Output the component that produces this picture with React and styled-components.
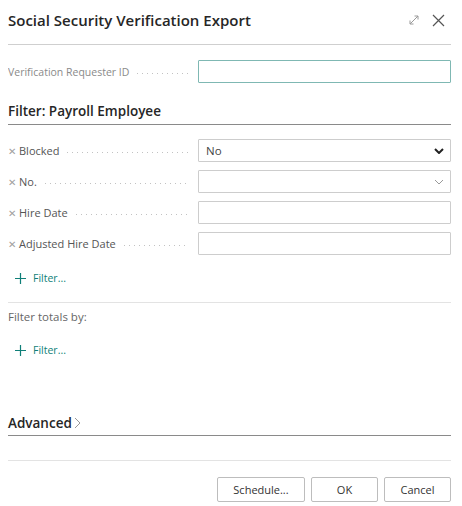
import React from 'react'
import styled, { createGlobalStyle } from 'styled-components'

const GlobalStyle = createGlobalStyle`
  body {
    margin: 0;
    background: #fff;
    font-family: "Open Sans", "Noto Sans", sans-serif;
    color: #333;
  }
`

const Dialog = styled.div`
  width: 462px;
  height: 506px;
  box-sizing: border-box;
  padding: 0 11px 0 8px;
  display: flex;
  flex-direction: column;
`

const Header = styled.div`
  display: flex;
  align-items: center;
  padding: 8px 0 12px;
  border-bottom: 1px solid #cfcfcf;
`

const Title = styled.h1`
  flex: 1;
  margin: 0;
  font-size: 15px;
  font-weight: 600;
  line-height: 24px;
  color: #262626;
`

const HeaderIcons = styled.div`
  display: flex;
  align-items: center;
  gap: 12px;
  padding-right: 6px;
`

const Row = styled.div`
  display: flex;
  align-items: center;
  margin-top: ${p => p.$top || 0}px;
`

const Label = styled.div`
  width: 190px;
  flex: none;
  display: flex;
  align-items: center;
  font-size: ${p => (p.$muted ? 10.5 : 11)}px;
  color: ${p => (p.$muted ? '#8a8a8a' : '#555')};
  white-space: nowrap;
  overflow: hidden;

  &::after {
    content: '';
    flex: 1;
    height: 1px;
    margin: 4px 10px 0 8px;
    background-image: linear-gradient(to right, #c2c2c2 1px, transparent 1px);
    background-size: 5px 1px;
  }
`

const Remove = styled.span`
  color: #a0a0a0;
  font-size: 10px;
  margin-right: 3px;
`

const Field = styled.div`
  flex: 1;
  height: 23px;
  box-sizing: border-box;
  border: 1px solid ${p => (p.$focused ? '#7fb8b3' : '#cdcdcd')};
  border-radius: 1px;
  display: flex;
  align-items: center;
  padding: 0 6px 0 7px;
  font-size: 11.5px;
  color: #444;
`

const FieldValue = styled.span`
  flex: 1;
`

const SectionTitle = styled.div`
  margin-top: ${p => p.$top}px;
  font-size: 13.5px;
  font-weight: 600;
  line-height: 20px;
  color: #262626;
  padding-bottom: ${p => p.$pad || 3}px;
  border-bottom: 1px solid #8a8a8a;
  display: flex;
  align-items: center;
  gap: 2px;
`

const Rows = styled.div`
  display: flex;
  flex-direction: column;
  gap: 8px;
  margin-top: 14px;
`

const FilterLink = styled.button`
  align-self: flex-start;
  margin-top: ${p => p.$top}px;
  margin-left: 6px;
  height: 20px;
  display: flex;
  align-items: center;
  gap: 6px;
  border: 0;
  background: none;
  padding: 0;
  font-family: inherit;
  font-size: 10.5px;
  color: #0f7f78;
`

const Divider = styled.div`
  margin-top: ${p => p.$top}px;
  border-top: 1px solid #e3e3e3;
`

const Note = styled.div`
  margin-top: 6px;
  font-size: 11.5px;
  line-height: 16px;
  color: #666;
`

const Footer = styled.div`
  display: flex;
  justify-content: flex-end;
  gap: 6px;
  margin-top: 16px;
`

const Button = styled.button`
  width: ${p => p.$w}px;
  height: 25px;
  box-sizing: border-box;
  border: 1px solid #bdbdbd;
  border-radius: 2px;
  background: #fff;
  font-family: inherit;
  font-size: 11px;
  color: #333;
`

const Plus = () => (
  <svg width="13" height="13" viewBox="0 0 13 13">
    <path d="M6.5 1v11M1 6.5h11" stroke="#0f7f78" strokeWidth="1.2" fill="none" />
  </svg>
)

const Chevron = ({ bold }) => (
  <svg width="10" height="6" viewBox="0 0 10 6">
    <path
      d="M1 1l4 4 4-4"
      stroke={bold ? '#222' : '#9a9a9a'}
      strokeWidth={bold ? 2 : 1}
      fill="none"
    />
  </svg>
)

const fields = [
  { label: 'Blocked', value: 'No', chevron: 'bold' },
  { label: 'No.', chevron: 'light' },
  { label: 'Hire Date' },
  { label: 'Adjusted Hire Date' },
]

const App = () => (
  <>
    <GlobalStyle />
    <Dialog>
      <Header>
        <Title>Social Security Verification Export</Title>
        <HeaderIcons>
          <svg width="12" height="12" viewBox="0 0 12 12">
            <path
              d="M2 10l8-8M6.5 2h3.5v3.5M2 6.5V10h3.5"
              stroke="#9a9a9a"
              strokeWidth="1"
              fill="none"
            />
          </svg>
          <svg width="13" height="13" viewBox="0 0 13 13">
            <path d="M1 1l11 11M12 1L1 12" stroke="#555" strokeWidth="1.2" fill="none" />
          </svg>
        </HeaderIcons>
      </Header>

      <Row $top={15}>
        <Label $muted>Verification Requester ID</Label>
        <Field $focused />
      </Row>

      <SectionTitle $top={18}>Filter: Payroll Employee</SectionTitle>

      <Rows>
        {fields.map(f => (
          <Row key={f.label}>
            <Label>
              <Remove>✕</Remove>
              {f.label}
            </Label>
            <Field>
              <FieldValue>{f.value}</FieldValue>
              {f.chevron && <Chevron bold={f.chevron === 'bold'} />}
            </Field>
          </Row>
        ))}
      </Rows>

      <FilterLink $top={13}>
        <Plus />
        Filter...
      </FilterLink>

      <Divider $top={14} />
      <Note>Filter totals by:</Note>

      <FilterLink $top={15}>
        <Plus />
        Filter...
      </FilterLink>

      <SectionTitle $top={53} $pad={2}>
        Advanced
        <svg width="7" height="12" viewBox="0 0 7 12">
          <path d="M1 1l5 5-5 5" stroke="#999" strokeWidth="1" fill="none" />
        </svg>
      </SectionTitle>

      <Divider $top={24} />

      <Footer>
        <Button $w={88}>Schedule...</Button>
        <Button $w={67}>OK</Button>
        <Button $w={67}>Cancel</Button>
      </Footer>
    </Dialog>
  </>
)

export default App
